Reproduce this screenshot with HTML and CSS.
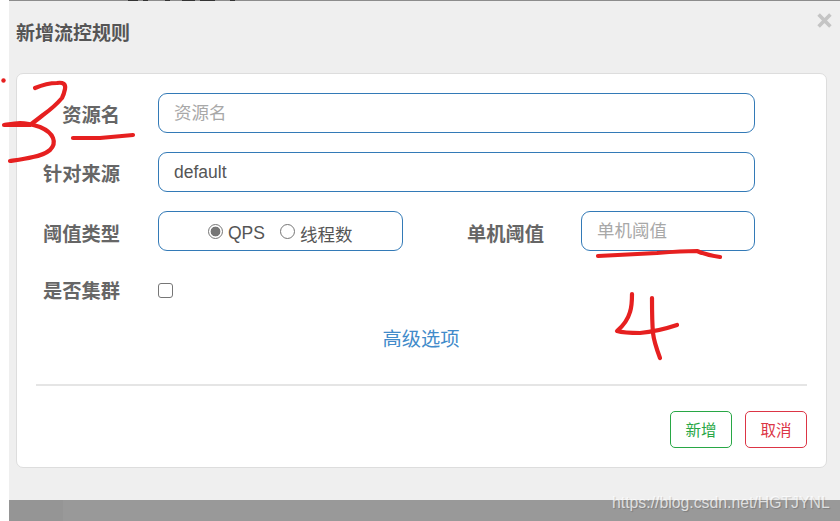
FILE: index.html
```html
<!DOCTYPE html>
<html lang="zh">
<head>
<meta charset="utf-8">
<title>新增流控规则</title>
<link rel="stylesheet" href="styles.css">
</head>
<body>
<div class="page">
  <div class="dialog">
    <div class="top-line"><span class="frag f1"></span><span class="frag f2"></span><span class="frag f3"></span><span class="frag f4"></span><span class="frag f5"></span><span class="frag f6"></span></div>
    <button class="close" type="button" aria-label="关闭">
      <svg width="15" height="15" viewBox="0 0 15 15"><path d="M1.6 1.6 L13.4 13.4 M13.4 1.6 L1.6 13.4" stroke="#c4c4c4" stroke-width="3.6" fill="none"/></svg>
    </button>
    <h1 class="title">新增流控规则</h1>
    <div class="card">
      <form class="form">
        <div class="row">
          <label class="label">资源名</label>
          <div class="box wide"><span class="ph">资源名</span></div>
        </div>
        <div class="row">
          <label class="label">针对来源</label>
          <div class="box wide"><span class="val">default</span></div>
        </div>
        <div class="row type-row">
          <label class="label">阈值类型</label>
          <div class="box type">
            <span class="radio on"></span><span class="opt">QPS</span>
            <span class="radio second"></span><span class="opt">线程数</span>
          </div>
          <label class="label side">单机阈值</label>
          <div class="box small"><span class="ph">单机阈值</span></div>
        </div>
        <div class="row check-row">
          <label class="label">是否集群</label>
          <span class="check"></span>
        </div>
        <div class="adv"><a class="link">高级选项</a></div>
      </form>
      <div class="rule"></div>
      <div class="actions">
        <button class="btn ok" type="button">新增</button>
        <button class="btn cancel" type="button">取消</button>
      </div>
    </div>
  </div>
  <div class="backdrop"><div class="backdrop-dark"></div></div>
</div>
<svg class="ink" width="840" height="521" viewBox="0 0 840 521" fill="none" stroke="#e62020" stroke-width="4.2" stroke-linecap="round" stroke-linejoin="round">
  <circle cx="3.5" cy="80.5" r="2.2" fill="#e62020" stroke="none"/>
  <path d="M35 88 C42 85 50 83 57 83 C63 82 66 84 65 89 C64 94 63 96 62 98 C56 105 50 110 43 115 C38 119 34 122 30 125 C22 125 12 125 4 125 C10 124 15 123 20 123 C28 123 34 125 40 127 C47 130 51 133 53 138 C55 143 53 147 50 150 C45 154 39 156 33 157 C25 159 17 160 10 161"/>
  <path d="M73 138 C82 138 91 138 100 138 C111 137 122 136 133 135"/>
  <path d="M598 256 C618 255 638 254 657 253 C670 252 684 251 697 251 C704 254 712 256 720 257"/>
  <path d="M632 294 C632 300 632 306 630 312 C628 319 623 326 617 331 C624 333 632 333 640 333 C652 332 665 329 677 325"/>
  <path d="M652 298 C652 310 652 322 653 333 C654 342 657 350 660 358"/>
</svg>
<div class="mark">https://blog.csdn.net/HGTJYNL</div>
</body>
</html>
```
FILE: styles.css
```css
* { box-sizing: border-box; }
html, body { margin: 0; padding: 0; }
body {
  width: 840px;
  height: 521px;
  overflow: hidden;
  background: #fff;
  font-family: "Liberation Sans", "Noto Sans CJK SC", sans-serif;
  position: relative;
}
.page {
  margin-left: 9px;
  height: 521px;
  display: flex;
  flex-direction: column;
}
.dialog {
  height: 500px;
  background: #efefef;
  padding: 22px 13px 0 7px;
  position: relative;
}
.top-line {
  position: absolute;
  left: 0;
  right: 0;
  top: 0;
  height: 1px;
  background: #8c8c8c;
}
.frag { position: absolute; top: 0; height: 1px; background: #333; }
.f1 { left: 119px; width: 10px; }
.f2 { left: 134px; width: 5px; }
.f3 { left: 156px; width: 5px; }
.f4 { left: 173px; width: 13px; }
.f5 { left: 191px; width: 15px; }
.f6 { left: 221px; width: 5px; }
.close {
  position: absolute;
  right: 8px;
  top: 13px;
  width: 15px;
  height: 15px;
  padding: 0;
  border: 0;
  background: none;
  display: flex;
}
.title {
  margin: 0;
  height: 25px;
  font-size: 19px;
  line-height: 24px;
  font-weight: 700;
  color: #555;
}
.card {
  margin-top: 26px;
  height: 395px;
  background: #fff;
  border: 1px solid #ddd;
  border-radius: 7px;
  padding: 19px 19px 0 19px;
}
.form { display: flex; flex-direction: column; gap: 19px; }
.row { display: flex; align-items: center; height: 40px; }
.label {
  width: 84px;
  margin-right: 38px;
  padding-top: 6px;
  text-align: right;
  font-size: 19.25px;
  font-weight: 700;
  color: #666;
  line-height: 34px;
  white-space: nowrap;
}
.type-row .label { padding-top: 7px; }
.label.side { margin-left: 63px; width: 78px; margin-right: 37px; }
.box {
  height: 40px;
  background: #fff;
  border: 1px solid #337ab7;
  border-radius: 9px;
  padding: 0 15px;
  font-size: 17.5px;
  color: #555;
  display: flex;
  align-items: center;
}
.wide { width: 597px; }
.type { width: 245px; padding: 0 0 0 49px; }
.small { width: 174px; }
.ph { color: #a8a8a8; position: relative; top: -2px; }
.opt { position: relative; top: 2px; }
.radio {
  width: 15px;
  height: 15px;
  margin-right: 5px;
  border: 1px solid #767676;
  border-radius: 50%;
  background: #fff;
  flex: none;
}
.radio.on { border: 1.5px solid #767676; background: radial-gradient(circle, #767676 0 4.6px, #fff 5.2px); }
.radio.second { margin-left: 15px; margin-right: 5px; }
.check-row { margin-top: 1px; height: 38px; }
.check-row .label { padding-top: 4px; }
.check {
  width: 15px;
  height: 15px;
  border: 1px solid #767676;
  border-radius: 3px;
  background: #fff;
}
.adv {
  margin-top: -3px;
  text-align: center;
  height: 30px;
  padding-right: 1px;
  line-height: 30px;
}
.link { font-size: 19.25px; color: #428bca; }
.rule { margin-top: 29px; height: 2px; background: #e5e5e5; }
.actions { display: flex; justify-content: flex-end; gap: 13px; margin-top: 25px; }
.btn {
  width: 62px;
  height: 37px;
  padding: 0 0 2px;
  background: #fff;
  border: 1px solid;
  border-radius: 5px;
  font-family: inherit;
  font-size: 15.5px;
}
.ok { border-color: #28a745; color: #28a745; }
.cancel { border-color: #dc3545; color: #dc3545; }
.backdrop { flex: 1; background: #999; }
.backdrop-dark { width: 54px; height: 100%; background: #959595; }
.ink { position: absolute; left: 0; top: 0; pointer-events: none; }
.mark {
  position: absolute;
  left: 612px;
  top: 492px;
  font-size: 15.8px;
  line-height: 22px;
  color: rgba(255, 255, 255, .72);
  text-shadow: 1px 1px 1px rgba(0, 0, 0, .18);
  white-space: nowrap;
}
```
